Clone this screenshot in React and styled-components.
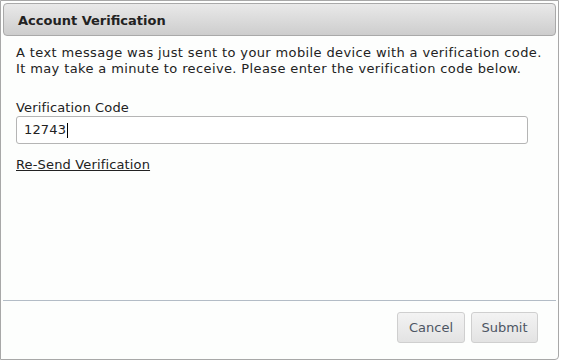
import React from "react";
import styled, { createGlobalStyle } from "styled-components";

const Global = createGlobalStyle`
  html, body { margin: 0; padding: 0; background: #ffffff; }
  body { font-family: "DejaVu Sans", Verdana, sans-serif; }
`;

const Dialog = styled.div`
  box-sizing: border-box;
  width: 559px;
  height: 360px;
  border: 1px solid #a8a8a8;
  border-radius: 0 0 4px 0;
  background: #fdfefd;
  padding: 2px;
  display: flex;
  flex-direction: column;
`;

const Header = styled.div`
  box-sizing: border-box;
  height: 33px;
  border: 1px solid #a9a9a9;
  border-radius: 4px;
  background: linear-gradient(#e9e9e9, #cdcdcd);
  display: flex;
  align-items: center;
  padding: 1px 0 0 14px;
  font-size: 13px;
  font-weight: bold;
  color: #222;
`;

const Body = styled.div`
  flex: 1;
  padding: 9px 0 0 13px;
  color: #222;
  font-size: 13px;
  line-height: 16px;
  letter-spacing: 0.15px;
`;

const Para = styled.p`
  margin: 0 0 23px;
  letter-spacing: 0.38px;
`;

const Label = styled.label`
  display: block;
  margin-bottom: 0;
`;

const Input = styled.div`
  box-sizing: border-box;
  width: 512px;
  height: 28px;
  border: 1px solid #b5b5b5;
  border-radius: 3px;
  padding: 5px 7px;
  background: #fff;
  display: flex;
  align-items: center;
`;

const Caret = styled.span`
  display: inline-block;
  width: 1px;
  height: 15px;
  background: #000;
  margin-left: 1px;
`;

const Link = styled.a`
  display: inline-block;
  margin-top: 13px;
  color: #222;
  text-decoration: underline;
`;

const Footer = styled.div`
  border-top: 1px solid #b3bcc6;
  height: 57px;
  display: flex;
  justify-content: flex-end;
  align-items: flex-start;
  gap: 6px;
  padding: 11px 18px 0 0;
  box-sizing: border-box;
`;

const Button = styled.button`
  box-sizing: border-box;
  width: ${(p) => p.$w}px;
  height: 31px;
  border: 1px solid #cfcfcf;
  border-radius: 3px;
  background: linear-gradient(#f3f3f3, #e3e3e3);
  color: #4d5563;
  font-family: "DejaVu Sans", Verdana, sans-serif;
  font-size: 13px;
  padding: 0;
`;

export default function App() {
  return (
    <>
      <Global />
      <Dialog>
        <Header>Account Verification</Header>
        <Body>
          <Para>
            A text message was just sent to your mobile device with a verification code.
            <br />
            It may take a minute to receive. Please enter the verification code below.
          </Para>
          <Label>Verification Code</Label>
          <Input>
            12743
            <Caret />
          </Input>
          <Link href="#">Re-Send Verification</Link>
        </Body>
        <Footer>
          <Button $w={68}>Cancel</Button>
          <Button $w={67}>Submit</Button>
        </Footer>
      </Dialog>
    </>
  );
}
